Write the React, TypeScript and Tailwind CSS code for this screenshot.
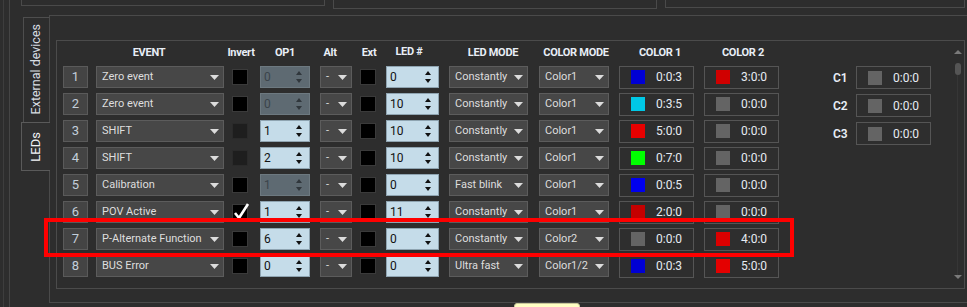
import React from 'react';

type Sw = [string, string];
interface Row {
  n: number;
  ev: string;
  inv: 'off' | 'dis' | 'on';
  op: string;
  opDis?: boolean;
  led: string;
  mode: string;
  cm: string;
  c1: Sw;
  c2: Sw;
}

const G = '#646464';
const rows: Row[] = [
  { n: 1, ev: 'Zero event', inv: 'off', op: '0', opDis: true, led: '0', mode: 'Constantly', cm: 'Color1', c1: ['#0000d4', '0:0:3'], c2: ['#d00000', '3:0:0'] },
  { n: 2, ev: 'Zero event', inv: 'off', op: '0', opDis: true, led: '10', mode: 'Constantly', cm: 'Color1', c1: ['#00c8e6', '0:3:5'], c2: [G, '0:0:0'] },
  { n: 3, ev: 'SHIFT', inv: 'dis', op: '1', led: '10', mode: 'Constantly', cm: 'Color1', c1: ['#e80000', '5:0:0'], c2: [G, '0:0:0'] },
  { n: 4, ev: 'SHIFT', inv: 'dis', op: '2', led: '10', mode: 'Constantly', cm: 'Color1', c1: ['#00ff00', '0:7:0'], c2: [G, '0:0:0'] },
  { n: 5, ev: 'Calibration', inv: 'off', op: '1', opDis: true, led: '0', mode: 'Fast blink', cm: 'Color1', c1: ['#0000ee', '0:0:5'], c2: [G, '0:0:0'] },
  { n: 6, ev: 'POV Active', inv: 'on', op: '1', led: '11', mode: 'Constantly', cm: 'Color1', c1: ['#c40000', '2:0:0'], c2: [G, '0:0:0'] },
  { n: 7, ev: 'P-Alternate Function', inv: 'off', op: '6', led: '0', mode: 'Constantly', cm: 'Color2', c1: [G, '0:0:0'], c2: ['#dc0000', '4:0:0'] },
  { n: 8, ev: 'BUS Error', inv: 'off', op: '0', led: '0', mode: 'Ultra fast', cm: 'Color1/2', c1: ['#0000d4', '0:0:3'], c2: ['#e40000', '5:0:0'] },
];

function DownArrow() {
  return (
    <svg width="9" height="5" viewBox="0 0 9 5" className="shrink-0">
      <path d="M0 0 H9 L4.5 5 Z" fill="#dcdcdc" />
    </svg>
  );
}

function Dropdown({ w, text }: { w: string; text: string }) {
  return (
    <div className={`${w} h-[22px] flex items-center justify-between pl-[5px] pr-[4px] bg-[#474747] border border-[#5c5c5c] text-[11px] text-[#dedede] whitespace-nowrap overflow-hidden`}>
      <span>{text}</span>
      <DownArrow />
    </div>
  );
}

function Spin({ w, v, dis }: { w: string; v: string; dis?: boolean }) {
  const fill = dis ? '#30373c' : '#111111';
  return (
    <div
      className={`${w} h-[22px] flex items-center justify-between pl-[3px] pr-[7px] border text-[12px] ${
        dis ? 'bg-[#5e6a72] border-[#6d7980] text-[#3b444b]' : 'bg-[#c5dce9] border-[#8fa4b1] text-[#111111]'
      }`}
    >
      <span>{v}</span>
      <div className="flex flex-col gap-[4px]">
        <svg width="6" height="4" viewBox="0 0 6 4">
          <path d="M3 0 L6 4 H0 Z" fill={fill} />
        </svg>
        <svg width="6" height="4" viewBox="0 0 6 4">
          <path d="M0 0 H6 L3 4 Z" fill={fill} />
        </svg>
      </div>
    </div>
  );
}

function Check({ state }: { state: 'off' | 'dis' | 'on' }) {
  return (
    <div
      className={`relative w-[16px] h-[16px] border ${
        state === 'dis' ? 'bg-[#1e1e1e] border-[#2a2a2a]' : 'bg-black border-[#3a3a3a]'
      }`}
    >
      {state === 'on' && (
        <svg width="18" height="19" viewBox="0 0 18 19" className="absolute left-[0px] top-[-3px]">
          <path d="M2 11 L6 16 L15 2" fill="none" stroke="#ffffff" strokeWidth="2.6" strokeLinejoin="round" />
        </svg>
      )}
    </div>
  );
}

function ColorBox({ sw }: { sw: Sw }) {
  return (
    <div className="w-[75px] h-[23px] flex items-center pl-[11px] border border-[#555555] bg-[#2e2e2e]">
      <div className="w-[14px] h-[14px]" style={{ backgroundColor: sw[0] }} />
      <span className="ml-[11px] text-[12px] text-[#e6ebf2]">{sw[1]}</span>
    </div>
  );
}

export default function App() {
  return (
    <div className="relative w-[967px] h-[307px] overflow-hidden bg-[#2d2d2d] [font-family:Roboto,sans-serif] flex">
      <div className="ml-[3px] w-px bg-[#3d3d3d]" />
      <div className="ml-[5px] w-px bg-[#454545]" />
      <div className="flex-1 flex flex-col">
        {/* top group boxes (bottom edges) */}
        <div className="h-[8px] flex items-start shrink-0">
          <div className="ml-[11px] w-[304px] h-[6px] border-x border-b border-[#4a4a4a]" />
          <div className="ml-[8px] w-[324px] h-[9px] border-x border-b border-[#4a4a4a]" />
          <div className="ml-[8px] w-[300px] h-[8px] border-x border-b border-[#4a4a4a]" />
        </div>
        {/* main */}
        <div className="flex flex-1">
          {/* tabs */}
          <div className="ml-[11px] w-[28px] flex flex-col shrink-0">
            <div className="mt-[9px] ml-[2px] w-[26px] h-[105px] border-l border-t border-[#4e4e4e] flex justify-center items-start pt-[6px]">
              <span className="[writing-mode:vertical-rl] rotate-180 text-[12.5px] text-[#d8dde3] whitespace-nowrap">External devices</span>
            </div>
            <div className="relative z-10 w-[29px] h-[49px] bg-[#303030] border-l border-t border-b border-[#5a5a5a] flex items-center justify-center">
              <span className="[writing-mode:vertical-rl] rotate-180 text-[13px] text-[#f2f4f7] whitespace-nowrap">LEDs</span>
            </div>
          </div>
          {/* content panel */}
          <div className="mt-[7px] h-[288px] flex-1 border-l border-t border-b border-[#4a4a4a]">
            <div className="ml-[6px] mt-[24px] w-[909px] h-[249px] border border-[#4b4b4b] flex pl-[6px]">
              {/* table */}
              <div className="w-[720px] flex flex-col pt-[3px] shrink-0">
                <div className="h-[18px] flex items-center text-[11px] font-bold text-[#e8eef6] tracking-tight whitespace-nowrap">
                  <div className="ml-[33px] w-[106px] text-center">EVENT</div>
                  <div className="ml-[20px] w-[38px] text-center">Invert</div>
                  <div className="w-[50px] text-center">OP1</div>
                  <div className="ml-[5px] w-[30px] text-center">Alt</div>
                  <div className="ml-[10px] w-[28px] text-center">Ext</div>
                  <div className="ml-[3px] w-[46px] text-center -mt-[2px]">LED #</div>
                  <div className="ml-[17px] w-[88px] text-center">LED MODE</div>
                  <div className="w-[78px] text-center">COLOR MODE</div>
                  <div className="ml-[5px] w-[80px] text-center">COLOR 1</div>
                  <div className="ml-[3px] w-[80px] text-center">COLOR 2</div>
                </div>
                <div className="mt-[4px] flex flex-col gap-[5px]">
                  {rows.map((r) => (
                    <div key={r.n} className="h-[22px] flex items-center">
                      <div className="w-[25px] h-[22px] flex items-center justify-center bg-[#444444] border border-[#5a5a5a] text-[13px] text-[#c3cfdb]">
                        {r.n}
                      </div>
                      <div className="ml-[8px]">
                        <Dropdown w="w-[128px]" text={r.ev} />
                      </div>
                      <div className="ml-[8px]">
                        <Check state={r.inv} />
                      </div>
                      <div className="ml-[12px]">
                        <Spin w="w-[50px]" v={r.op} dis={r.opDis} />
                      </div>
                      <div className="ml-[10px]">
                        <Dropdown w="w-[32px]" text="-" />
                      </div>
                      <div className="ml-[8px]">
                        <Check state="off" />
                      </div>
                      <div className="ml-[10px]">
                        <Spin w="w-[53px]" v={r.led} />
                      </div>
                      <div className="ml-[10px]">
                        <Dropdown w="w-[79px]" text={r.mode} />
                      </div>
                      <div className="ml-[11px]">
                        <Dropdown w="w-[70px]" text={r.cm} />
                      </div>
                      <div className="ml-[10px]">
                        <ColorBox sw={r.c1} />
                      </div>
                      <div className="ml-[10px]">
                        <ColorBox sw={r.c2} />
                      </div>
                    </div>
                  ))}
                </div>
              </div>
              {/* C1..C3 */}
              <div className="ml-[50px] mt-[25px] flex flex-col gap-[5px]">
                {['C1', 'C2', 'C3'].map((c) => (
                  <div key={c} className="h-[23px] flex items-center">
                    <div className="w-[23px] text-[12px] font-semibold text-[#e8eef6]">{c}</div>
                    <ColorBox sw={[G, '0:0:0']} />
                  </div>
                ))}
              </div>
              {/* scrollbar */}
              <div className="ml-auto mr-[2px] w-[9px] flex flex-col items-center">
                <svg width="8" height="4" viewBox="0 0 8 4" className="mt-[9px]">
                  <path d="M4 0 L8 4 H0 Z" fill="#7a7a7a" />
                </svg>
                <div className="mt-[9px] w-[6px] h-[12px] rounded-full bg-[#555555]" />
                <div className="flex-1 w-px bg-[#363636]" />
                <svg width="8" height="4" viewBox="0 0 8 4" className="mb-[9px]">
                  <path d="M0 0 H8 L4 4 Z" fill="#7a7a7a" />
                </svg>
              </div>
            </div>
          </div>
        </div>
      </div>

      {/* highlight */}
      <div className="absolute left-[44px] top-[218px] w-[750px] h-[39px] border-[4px] border-[#ff0000]" />
      {/* tooltip edge */}
      <div className="absolute left-[514px] top-[303px] w-[66px] h-[8px] bg-[#ffffc4] border border-[#c8c89a] rounded-t-[3px]" />
    </div>
  );
}
